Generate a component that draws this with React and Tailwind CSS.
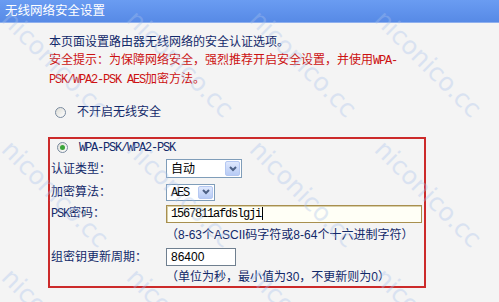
const mono = "font-['Liberation_Mono',monospace] tracking-[-1.2px]";

const Radio = ({ checked }) => (
  <span className="w-[11px] h-[11px] rounded-full border border-[#7a8ba0] bg-gradient-to-br from-[#dcdcd6] to-white flex items-center justify-center">
    {checked && <span className="w-[5px] h-[5px] rounded-full bg-[#3aa53a]" />}
  </span>
);

const Select = ({ value, width, height }) => (
  <div
    className="border border-[#7f9db9] bg-white flex items-center justify-between pl-[4px] pr-[1px]"
    style={{ width, height }}
  >
    <span className="text-[#000] leading-none">{value}</span>
    <span className="w-[15px] h-[calc(100%-2px)] rounded-[2px] border border-[#b5c8f2] bg-gradient-to-b from-[#dfe8fd] to-[#b7cbf5] flex items-center justify-center">
      <svg width="8" height="6" viewBox="0 0 8 6">
        <path d="M1 1 L4 4 L7 1" fill="none" stroke="#4d6185" strokeWidth="2" />
      </svg>
    </span>
  </div>
);

const Row = ({ h, label, children }) => (
  <div className="flex items-center" style={{ height: h }}>
    <div className="w-[115px] shrink-0">{label}</div>
    <div className="flex items-center">{children}</div>
  </div>
);

const App = () => {
  const marks = [];
  const cols = [15, 140, 263, 388];
  const rows = [6, 136, 264];
  rows.forEach((y) => cols.forEach((x) => marks.push({ x, y })));

  return (
    <div className="relative w-[499px] h-[302px] overflow-hidden bg-[#f4f4f4] text-[12px] text-[#12296a] font-['Liberation_Sans','Noto_Sans_CJK_SC',sans-serif]">
      <div className="h-[23px] bg-gradient-to-b from-[#6a9cf2] to-[#578ae6] text-white text-[12.5px] leading-[23px] pl-[5px] border-b border-[#8fb0ee]">
        无线网络安全设置
      </div>

      <div className="pl-[48px] pt-[10px]">
        <div className="pl-[1px] leading-[18px]">
          <div>本页面设置路由器无线网络的安全认证选项。</div>
          <div className="text-[#cc1111]">
            安全提示：为保障网络安全，强烈推荐开启安全设置，并使用<span className={mono}>WPA-</span>
          </div>
          <div className="text-[#cc1111]">
            <span className={mono}>PSK/WPA2-PSK AES</span>加密方法。
          </div>
        </div>

        <div className="flex items-center h-[18px] mt-[14px] pl-[7px] gap-[11px]">
          <Radio />
          <span>不开启无线安全</span>
        </div>

        <div className="mt-[16px] w-[378px] h-[151px] border-2 border-[#cc2a2a] pl-[1px]">
          <div className="flex items-center h-[17px] pl-[6px] gap-[11px]">
            <Radio checked />
            <span className={mono}>WPA-PSK/WPA2-PSK</span>
          </div>
          <Row h={25} label="认证类型：">
            <Select value="自动" width={76} height={19} />
          </Row>
          <Row h={22} label="加密算法：">
            <Select value={<span className={mono}>AES</span>} width={49} height={17} />
          </Row>
          <Row h={21} label={<><span className={mono}>PSK</span>密码：</>}>
            <div className="w-[256px] h-[18px] border border-[#a88f4e] bg-[#fffff6] shadow-[inset_1px_1px_0_#d8cfa8] flex items-center pl-[4px] text-black">
              <span className={`${mono} tracking-[-0.6px]`}>1567811afdslgji</span>
              <span className="w-px h-[13px] bg-black ml-[1px]" />
            </div>
          </Row>
          <Row h={22} label="">
            <span>（8-63个ASCII码字符或8-64个十六进制字符）</span>
          </Row>
          <Row h={22} label="组密钥更新周期：">
            <div className="w-[70px] h-[18px] border border-[#6f7f8f] bg-white flex items-center pl-[4px] text-black">
              86400
            </div>
          </Row>
          <Row h={17} label="">
            <span>（单位为秒，最小值为30，不更新则为0）</span>
          </Row>
        </div>
      </div>

      {marks.map((m, i) => (
        <span
          key={i}
          className="absolute pointer-events-none whitespace-nowrap text-[25px] leading-none text-[#a9c2ec] opacity-35 origin-top-left rotate-45 font-['DejaVu_Sans',sans-serif]"
          style={{ left: m.x, top: m.y }}
        >
          niconico.cc
        </span>
      ))}
    </div>
  );
};

export default App;
